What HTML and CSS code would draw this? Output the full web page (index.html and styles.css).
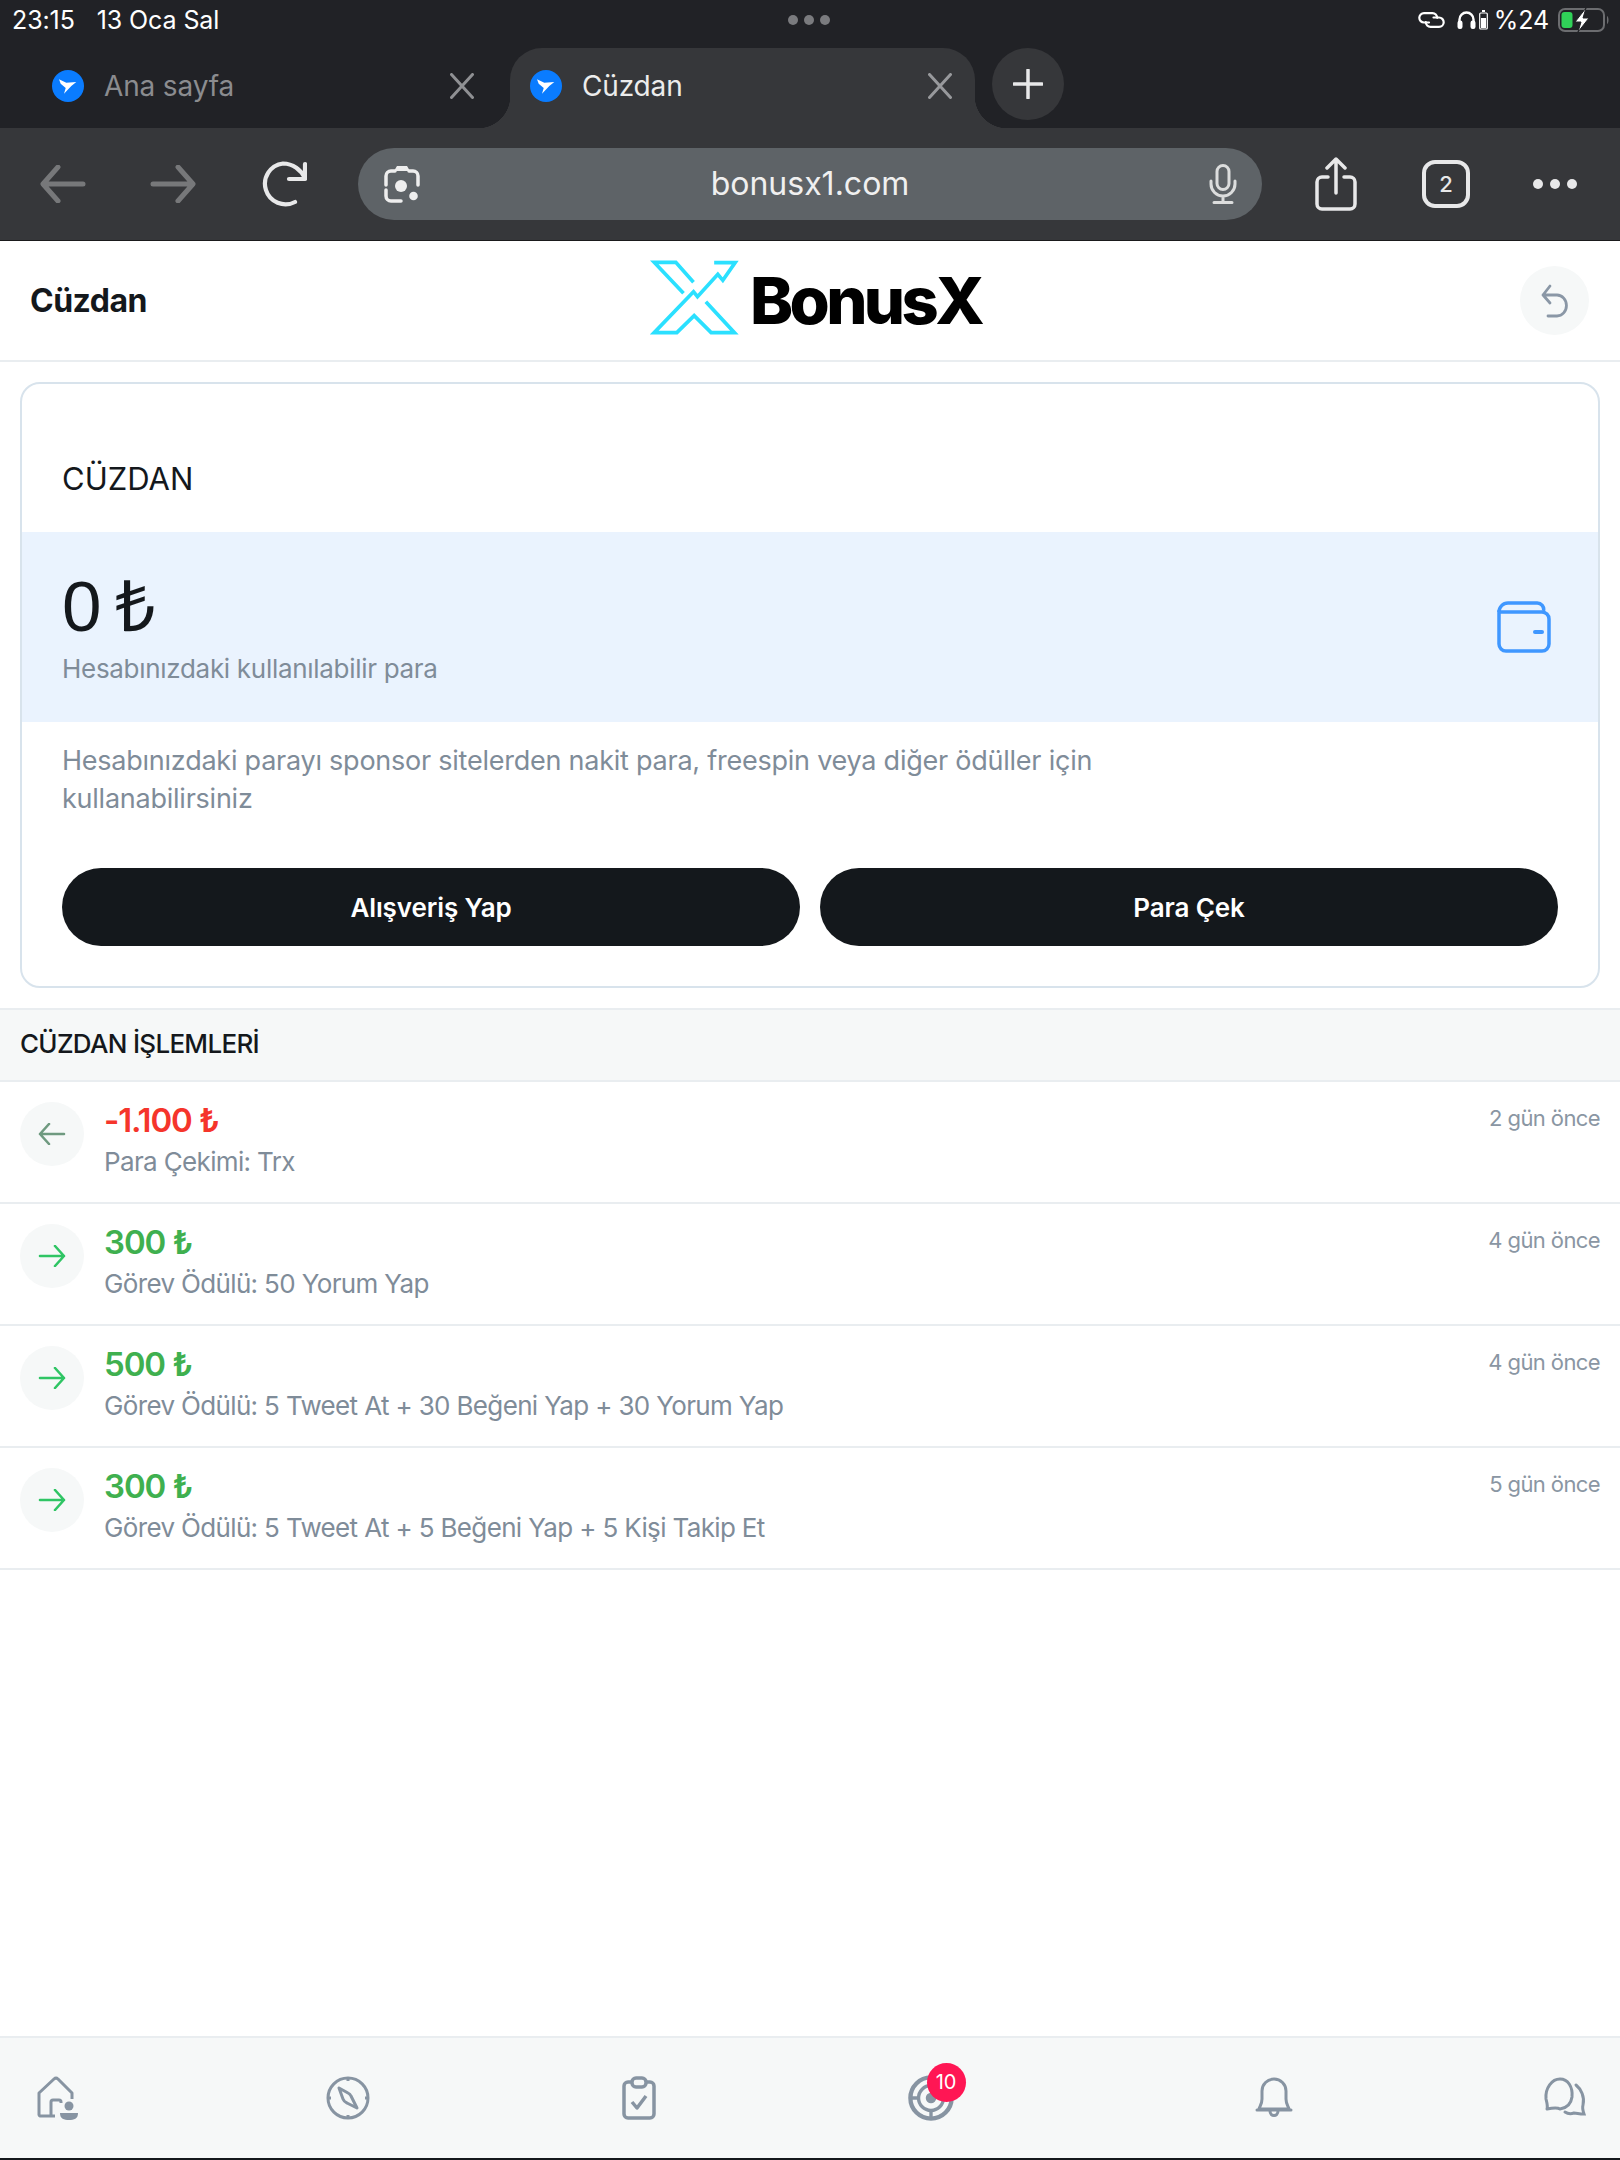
FILE: index.html
```html
<!DOCTYPE html>
<html lang="tr">
<head>
<meta charset="utf-8">
<title>Cüzdan</title>
<link rel="stylesheet" href="styles.css">
</head>
<body>
<div class="browser">
  <div class="status">
    <div class="status-left"><span>23:15</span><span>13 Oca Sal</span></div>
    <div class="status-dots"><i></i><i></i><i></i></div>
    <div class="status-right">
      <svg class="st-link" viewBox="0 0 27 16"><g fill="none" stroke="#fff" stroke-width="2.200" stroke-linecap="round"><path d="M11 10.500H6a4.700 4.700 0 0 1 0-9.400h8.500a4.700 4.700 0 0 1 4.700 4.700"/><path d="M15.500 5.500H21a4.700 4.700 0 0 1 0 9.400h-8.500a4.700 4.700 0 0 1-4.700-4.700"/></g></svg>
      <svg class="st-head" viewBox="0 0 19 19"><path d="M2.500 12V9.500a7 7 0 0 1 14 0V12" fill="none" stroke="#fff" stroke-width="2.400"/><rect x="0.500" y="10.500" width="5" height="8.500" rx="2.200" fill="#fff"/><rect x="13.500" y="10.500" width="5" height="8.500" rx="2.200" fill="#fff"/></svg>
      <svg class="st-cell" viewBox="0 0 9 20"><rect x="3" y="0" width="3" height="2" fill="#fff"/><rect x="0.700" y="3" width="7.600" height="16" rx="1" fill="none" stroke="#fff" stroke-width="1.200"/><rect x="2" y="8" width="5" height="10" fill="#fff"/></svg>
      <span class="st-pct">%24</span>
      <svg class="st-batt" viewBox="0 0 52 24"><rect x="1" y="1" width="45" height="22" rx="6" fill="none" stroke="#6c6d70" stroke-width="2"/><rect x="3.500" y="4" width="11" height="16" rx="3" fill="#30d158"/><path d="M28 0 17 14h6l-3 10 11-14h-6l3-10z" fill="#fff" stroke="#212226" stroke-width="1"/><path d="M49 8c2 1 2 7 0 8z" fill="#6c6d70"/></svg>
    </div>
  </div>
  <div class="tabs">
    <div class="tab">
      <svg class="fav" viewBox="0 0 32 32"><circle cx="16" cy="16" r="16" fill="#0a7cff"/><path d="M7 9.300 14.300 12.700 24.300 12 19.300 16 12 23.700 13.700 18 8.700 13.700z" fill="#fff"/></svg>
      <span class="tab-title">Ana sayfa</span>
      <svg class="tab-x" viewBox="0 0 24 26"><path d="M1.500 1.500l21 23M22.500 1.500l-21 23" stroke="#8f9093" stroke-width="3" stroke-linecap="round"/></svg>
    </div>
    <div class="tab tab-active">
      <svg class="fav" viewBox="0 0 32 32"><circle cx="16" cy="16" r="16" fill="#0a7cff"/><path d="M7 9.300 14.300 12.700 24.300 12 19.300 16 12 23.700 13.700 18 8.700 13.700z" fill="#fff"/></svg>
      <span class="tab-title">Cüzdan</span>
      <svg class="tab-x" viewBox="0 0 24 26"><path d="M1.500 1.500l21 23M22.500 1.500l-21 23" stroke="#98999c" stroke-width="3" stroke-linecap="round"/></svg>
    </div>
    <div class="tab-new"><svg viewBox="0 0 30 30"><path d="M15 1v28M1 15h28" stroke="#e8e8e9" stroke-width="3.500" stroke-linecap="round"/></svg></div>
  </div>
  <div class="toolbar">
    <svg class="tb-arrow" viewBox="0 0 46 38"><path d="M43 19H4M18 2 3 19l15 17" fill="none" stroke="#77787a" stroke-width="5" stroke-linecap="round" stroke-linejoin="round"/></svg>
    <svg class="tb-arrow" viewBox="0 0 46 38"><path d="M3 19h39M28 2l15 17-15 17" fill="none" stroke="#77787a" stroke-width="5" stroke-linecap="round" stroke-linejoin="round"/></svg>
    <svg class="tb-reload" viewBox="0 0 46 46"><path d="M34 41A20.500 20.500 0 1 1 22 2.500C32 2.500 40 9 44 17" fill="none" stroke="#e8e8e9" stroke-width="4.200" stroke-linecap="round"/><path d="M44 3v15H28" fill="none" stroke="#e8e8e9" stroke-width="4.200" stroke-linecap="round" stroke-linejoin="round"/></svg>
    <div class="urlbar">
      <svg class="lens" viewBox="0 0 38 38"><path d="M12 6H8a5 5 0 0 0-5 5v9M3 25v6a5 5 0 0 0 5 5h10M26 6h4a5 5 0 0 1 5 5v9" fill="none" stroke="#eee" stroke-width="3.500" stroke-linecap="round"/><path d="M11 6l3-5h10l3 5z" fill="#eee"/><circle cx="18" cy="21" r="6" fill="#eee"/><circle cx="30.500" cy="31" r="4.300" fill="#eee"/></svg>
      <span class="url">bonusx1.com</span>
      <svg class="mic" viewBox="0 0 28 40"><rect x="8" y="1.500" width="12" height="24" rx="6" fill="none" stroke="#dcdddd" stroke-width="3"/><path d="M2 17v3a12 12 0 0 0 24 0v-3M14 32v6M5 38.500h18" fill="none" stroke="#dcdddd" stroke-width="3" stroke-linecap="round"/></svg>
    </div>
    <svg class="share" viewBox="0 0 42 54"><path d="M13 20H7a5 5 0 0 0-5 5v22a5 5 0 0 0 5 5h28a5 5 0 0 0 5-5V25a5 5 0 0 0-5-5h-6" fill="none" stroke="#e8e8e9" stroke-width="3.500" stroke-linecap="round"/><path d="M21 36V3M12 11l9-9 9 9" fill="none" stroke="#e8e8e9" stroke-width="3.500" stroke-linecap="round" stroke-linejoin="round"/></svg>
    <div class="tabcount">2</div>
    <div class="more"><i></i><i></i><i></i></div>
  </div>
</div>

<header class="header">
  <h1 class="page-title">Cüzdan</h1>
  <div class="logo">
    <svg class="logo-mark" viewBox="80 65 275 225"><path d="M180 165 92 72h65l53 60M247 190l86 93h-70l-51-51-52 51H92l118-123 12 15 61-67 15 18 37-53h-63" fill="none" stroke="#2be0ff" stroke-width="11"/></svg>
    <span class="logo-text">BonusX</span>
  </div>
  <div class="back-btn"><svg viewBox="0 0 28 34"><path d="M2 11h14a9 10 0 0 1 0 21H7M9 2 2 11l7 8" fill="none" stroke="#8a97a6" stroke-width="2.800" stroke-linecap="round" stroke-linejoin="round"/></svg></div>
</header>

<main class="content">
  <section class="card">
    <h2 class="card-title">CÜZDAN</h2>
    <div class="balance">
      <div>
        <div class="balance-amount">0 ₺</div>
        <div class="balance-label">Hesabınızdaki kullanılabilir para</div>
      </div>
      <svg class="wallet" viewBox="0 0 54 52"><path d="M2 11a9 9 0 0 1 9-9h29a6.500 6.500 0 0 1 6.500 8" fill="none" stroke="#3f97ff" stroke-width="3.500"/><path d="M2 11v32a7 7 0 0 0 7 7h36a7 7 0 0 0 7-7V18a7 7 0 0 0-7-7z" fill="none" stroke="#3f97ff" stroke-width="3.500"/><path d="M38 31h7" stroke="#3f97ff" stroke-width="4" stroke-linecap="round"/></svg>
    </div>
    <p class="card-text">Hesabınızdaki parayı sponsor sitelerden nakit para, freespin veya diğer ödüller için kullanabilirsiniz</p>
    <div class="actions">
      <button class="btn">Alışveriş Yap</button>
      <button class="btn">Para Çek</button>
    </div>
  </section>

  <section class="txs">
    <h3 class="txs-title">CÜZDAN İŞLEMLERİ</h3>
    <div class="tx">
      <div class="tx-ico"><svg viewBox="0 0 28 22"><path d="M26 11H2M11 1 2 11l9 10" fill="none" stroke="#6f9a80" stroke-width="2.600" stroke-linecap="round" stroke-linejoin="round"/></svg></div>
      <div class="tx-body"><div class="tx-amt neg">-1.100 ₺</div><div class="tx-desc">Para Çekimi: Trx</div></div>
      <div class="tx-time">2 gün önce</div>
    </div>
    <div class="tx">
      <div class="tx-ico"><svg viewBox="0 0 28 22"><path d="M2 11h24M17 1l9 10-9 10" fill="none" stroke="#2fc564" stroke-width="2.600" stroke-linecap="round" stroke-linejoin="round"/></svg></div>
      <div class="tx-body"><div class="tx-amt pos">300 ₺</div><div class="tx-desc">Görev Ödülü: 50 Yorum Yap</div></div>
      <div class="tx-time">4 gün önce</div>
    </div>
    <div class="tx">
      <div class="tx-ico"><svg viewBox="0 0 28 22"><path d="M2 11h24M17 1l9 10-9 10" fill="none" stroke="#2fc564" stroke-width="2.600" stroke-linecap="round" stroke-linejoin="round"/></svg></div>
      <div class="tx-body"><div class="tx-amt pos">500 ₺</div><div class="tx-desc">Görev Ödülü: 5 Tweet At + 30 Beğeni Yap + 30 Yorum Yap</div></div>
      <div class="tx-time">4 gün önce</div>
    </div>
    <div class="tx">
      <div class="tx-ico"><svg viewBox="0 0 28 22"><path d="M2 11h24M17 1l9 10-9 10" fill="none" stroke="#2fc564" stroke-width="2.600" stroke-linecap="round" stroke-linejoin="round"/></svg></div>
      <div class="tx-body"><div class="tx-amt pos">300 ₺</div><div class="tx-desc">Görev Ödülü: 5 Tweet At + 5 Beğeni Yap + 5 Kişi Takip Et</div></div>
      <div class="tx-time">5 gün önce</div>
    </div>
  </section>
</main>

<nav class="bottom">
  <div class="nav-item"><svg viewBox="0 0 44 44"><path d="M20 40H5a2 2 0 0 1-1-2V17L19 3a3 3 0 0 1 4 0l14 14v6M5 40h10a1 1 0 0 0 1-1V26a2 2 0 0 1 2-2h6a2 2 0 0 1 2 2v1" fill="none" stroke="#8794a2" stroke-width="3" stroke-linejoin="round"/><circle cx="34" cy="30" r="4.500" fill="#8794a2"/><path d="M25 37h18c0 6-4 7-9 7s-9-1-9-7z" fill="#8794a2"/></svg></div>
  <div class="nav-item"><svg viewBox="0 0 44 44"><circle cx="22" cy="22" r="20" fill="none" stroke="#8794a2" stroke-width="3"/><path d="M13 12l9 5a6 6 0 0 1 3 3l6 12-10-5a7 7 0 0 1-4-4z" fill="none" stroke="#8794a2" stroke-width="3" stroke-linejoin="round"/><path d="M22 2v3M22 39v3M2 22h3M39 22h3" stroke="#8794a2" stroke-width="3"/></svg></div>
  <div class="nav-item"><svg viewBox="0 0 44 44"><rect x="7" y="6" width="30" height="36" rx="4" fill="none" stroke="#8794a2" stroke-width="3.500"/><rect x="15" y="2" width="14" height="9" rx="4" fill="#f6f8f8" stroke="#8794a2" stroke-width="3.500"/><path d="M15 26l5 6 9-12" fill="none" stroke="#8794a2" stroke-width="3.500" stroke-linejoin="round"/></svg></div>
  <div class="nav-item nav-target">
    <svg viewBox="0 0 48 48"><circle cx="24" cy="24" r="21.500" fill="none" stroke="#8794a2" stroke-width="4.500"/><circle cx="24" cy="24" r="13" fill="none" stroke="#8794a2" stroke-width="3.500"/><circle cx="24" cy="24" r="5.500" fill="#8794a2"/><path d="M24 37v8M3 24h8" stroke="#8794a2" stroke-width="3.500"/></svg>
    <span class="badge">10</span>
  </div>
  <div class="nav-item"><svg viewBox="0 0 44 44"><path d="M7 33c1-3 3-5 3-10v-8a12 12 0 0 1 24 0v8c0 5 2 7 3 10zM5 34h34M18 35c0 6 8 6 8 0" fill="none" stroke="#8794a2" stroke-width="3" stroke-linejoin="round" stroke-linecap="round"/></svg></div>
  <div class="nav-item"><svg viewBox="0 0 44 44"><path d="M4 33c1-3 0-6-1-10C2 12 9 3 17 3s13 8 12 18c-1 7-5 11-12 12-3-2-8-1-13 0z" fill="none" stroke="#8794a2" stroke-width="3" stroke-linejoin="round"/><path d="M33 9c5 4 9 12 7 20-1 3 0 6 1 9-5 0-7-1-10-1-3 1-6 1-9-1" fill="none" stroke="#8794a2" stroke-width="3" stroke-linecap="round"/></svg></div>
</nav>
</body>
</html>
```
FILE: styles.css
```css
* { box-sizing: border-box; }
html, body { margin: 0; padding: 0; }
body {
  width: 1620px;
  height: 2160px;
  display: flex;
  flex-direction: column;
  background: #fff;
  font-family: Inter, "Noto Sans", sans-serif;
  color: #14181c;
  overflow: hidden;
}
svg { display: block; flex: none; }

/* browser chrome */
.browser { background: #212226; border-bottom: 1px solid #1a1a1c; flex: none; }
.status {
  height: 48px;
  display: flex;
  align-items: center;
  justify-content: space-between;
  padding: 0 14px 9px 12px;
  color: #fff;
  font-size: 25px;
  letter-spacing: -0.1px;
}
.status-left { display: flex; gap: 22px; width: 300px; }
.status-dots { display: flex; gap: 6px; }
.status-dots i { width: 10px; height: 10px; border-radius: 50%; background: #7a7b7e; }
.status-right { display: flex; align-items: center; width: 300px; justify-content: flex-end; }
.st-link { width: 27px; height: 16px; margin-right: 12px; }
.st-head { width: 19px; height: 19px; margin-right: 3px; }
.st-cell { width: 9px; height: 20px; margin-right: 6px; }
.st-pct { margin-right: 9px; }
.st-batt { width: 52px; height: 24px; margin-right: -4px; }

.tabs { height: 80px; display: flex; align-items: stretch; }
.tab {
  width: 510px;
  display: flex;
  align-items: center;
  padding: 0 36px 5px 52px;
  color: #8b8c8f;
  font-size: 28px;
  letter-spacing: -0.15px;
}
.tab-active {
  width: 465px;
  padding: 0 23px 5px 20px;
  margin-right: 17px;
  background: #36373a;
  border-radius: 32px 32px 0 0;
  color: #ececec;
  position: relative;
}
.tab-active::before, .tab-active::after {
  content: "";
  position: absolute;
  bottom: 0;
  width: 32px;
  height: 32px;
}
.tab-active::before { left: -32px; background: radial-gradient(circle at 0 0, transparent 32px, #36373a 32.5px); }
.tab-active::after { right: -32px; background: radial-gradient(circle at 100% 0, transparent 32px, #36373a 32.5px); }
.fav { width: 32px; height: 32px; margin-right: 20px; }
.tab-title { flex: 1; }
.tab-x { width: 24px; height: 26px; }
.tab-new {
  width: 72px;
  height: 72px;
  border-radius: 50%;
  background: #36373a;
  display: flex;
  align-items: center;
  justify-content: center;
  position: relative;
}
.tab-new svg { width: 30px; height: 30px; }

.toolbar {
  height: 112px;
  background: #36373a;
  display: flex;
  align-items: center;
  padding-left: 40px;
}
.tb-arrow { width: 46px; height: 38px; margin-right: 64px; }
.tb-reload { width: 46px; height: 46px; margin-left: 1px; margin-right: 51px; }
.urlbar {
  width: 904px;
  height: 72px;
  border-radius: 36px;
  background: #5e6367;
  display: flex;
  align-items: center;
  padding: 0 25px;
  color: #f0f0f0;
  font-size: 32px;
}
.lens { width: 38px; height: 38px; }
.url { flex: 1; text-align: center; margin-right: 10px; padding-bottom: 2px; }
.mic { width: 28px; height: 40px; }
.share { width: 42px; height: 54px; margin-left: 53px; margin-right: 65px; }
.tabcount {
  width: 48px;
  height: 48px;
  border: 4px solid #e8e8e9;
  border-radius: 13px;
  color: #e8e8e9;
  font-size: 22px;
  font-weight: 500;
  display: flex;
  align-items: center;
  justify-content: center;
}
.more { display: flex; gap: 7px; margin-left: 63px; }
.more i { width: 10px; height: 10px; border-radius: 50%; background: #e8e8e9; }

/* page header */
.header {
  height: 121px;
  flex: none;
  display: grid;
  grid-template-columns: 1fr auto 1fr;
  align-items: center;
  padding: 0 31px 0 30px;
  border-bottom: 2px solid #e9edf0;
}
.page-title { margin: 0; font-size: 32px; font-weight: 700; letter-spacing: -0.5px; color: #14181c; }
.logo { display: flex; align-items: center; gap: 8px; margin-left: 12px; }
.logo-mark { width: 92px; height: 75px; margin-bottom: 6px; }
.logo-text { font-size: 65px; font-weight: 800; letter-spacing: -3.6px; color: #000; line-height: 75px; }
.back-btn {
  width: 69px;
  height: 69px;
  border-radius: 50%;
  background: #f6f8f8;
  display: flex;
  align-items: center;
  justify-content: center;
  justify-self: end;
}
.back-btn svg { width: 28px; height: 34px; }

/* card */
.content { flex: 1; padding-top: 20px; }
.card {
  margin: 0 20px 20px;
  border: 2px solid #d8e3ec;
  border-radius: 20px;
  height: 606px;
  overflow: hidden;
}
.card-title { margin: 0; height: 148px; padding: 72px 40px 0; font-size: 31px; line-height: 46px; font-weight: 400; color: #14181c; letter-spacing: 0; }
.balance {
  height: 190px;
  background: #eaf3fe;
  display: flex;
  align-items: center;
  justify-content: space-between;
  padding: 0 47px 0 40px;
}
.balance-amount { font-family: "Liberation Sans", Arial, sans-serif; font-size: 71px; line-height: 78px; font-weight: 400; color: #14181c; letter-spacing: -3px; padding-top: 2px; }
.balance-label { font-size: 26px; line-height: 38px; color: #7f8c99; letter-spacing: -0.3px; margin-top: 4px; }
.wallet { width: 54px; height: 52px; }
.card-text { margin: 20px 0 0; padding: 0 40px; max-width: 1140px; font-size: 27px; line-height: 38px; color: #7f8c99; letter-spacing: -0.24px; }
.actions { display: flex; gap: 20px; padding: 0 40px; margin-top: 50px; }
.btn {
  flex: 1;
  height: 78px;
  border: 0;
  border-radius: 39px;
  background: #14181c;
  color: #fff;
  font-family: inherit;
  font-size: 26px;
  font-weight: 600;
  letter-spacing: -0.1px;
}

/* transactions */
.txs { border-top: 2px solid #e9edf0; }
.txs-title {
  margin: 0;
  height: 72px;
  background: #f6f8f8;
  border-bottom: 2px solid #e9edf0;
  padding: 0 20px;
  font-size: 26px;
  line-height: 68px;
  font-weight: 500;
  color: #14181c;
  letter-spacing: -0.7px;
}
.tx {
  height: 122px;
  display: flex;
  align-items: flex-start;
  padding: 20px 20px 0;
  border-bottom: 2px solid #e9edf0;
}
.tx-ico {
  width: 64px;
  height: 64px;
  border-radius: 50%;
  background: #f6f8f8;
  display: flex;
  align-items: center;
  justify-content: center;
  margin-right: 20px;
}
.tx-ico svg { width: 28px; height: 22px; }
.tx-body { flex: 1; margin-top: -2px; }
.tx-amt { font-size: 33px; line-height: 40px; font-weight: 600; letter-spacing: -1.1px; }
.neg { color: #f5352b; }
.pos { color: #3fb04f; }
.tx-desc { font-size: 26px; line-height: 36px; color: #7f8c99; margin-top: 4px; letter-spacing: -0.65px; }
.tx-time { font-size: 22px; line-height: 34px; color: #8a96a3; letter-spacing: -0.6px; margin-top: -1px; }

/* bottom nav */
.bottom {
  height: 124px;
  flex: none;
  background: #f6f8f8;
  border-top: 2px solid #e9edf0;
  border-bottom: 2px solid #14181c;
  display: flex;
  align-items: center;
  justify-content: space-between;
  padding: 0 33px 0 35px;
}
.nav-item { width: 44px; height: 44px; position: relative; }
.nav-item svg { width: 44px; height: 44px; }
.nav-target { width: 96px; }
.nav-target svg { width: 46px; height: 46px; margin: -1px; }
.badge {
  position: absolute;
  left: 18px;
  top: -13px;
  width: 39px;
  height: 39px;
  border-radius: 50%;
  background: #ff1654;
  color: #fff;
  font-size: 20px;
  line-height: 39px;
  text-align: center;
}
```
